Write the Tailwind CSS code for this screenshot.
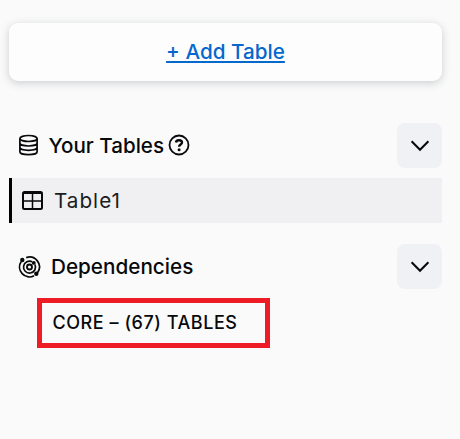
<!DOCTYPE html>
<html lang="en">
<head>
<meta charset="utf-8">
<title>Tables</title>
<script src="https://cdn.jsdelivr.net/npm/@tailwindcss/browser@4"></script>
</head>
<body class="bg-[#fafafa] font-['Inter',sans-serif] text-[#08090b] overflow-hidden">
<main class="w-[442px] pl-[9px] pt-[23px] h-[439px]">
  <div class="h-[58px] rounded-[9px] bg-[#fdfdfd] shadow-[0_2px_8px_rgba(40,50,70,0.22)] flex items-center justify-center">
    <a class="text-[20.700px] leading-[24px] font-medium text-[#0568cd] underline decoration-2 underline-offset-[2px] whitespace-nowrap">+ Add Table</a>
  </div>
  <section class="mt-[42px]">
    <header class="flex items-center h-[45px] pl-[9px]">
      <svg class="w-[21px] h-[22px] mb-[2px] shrink-0" viewBox="0 0 21 22" fill="none" stroke="currentColor" stroke-width="1.700"><ellipse cx="10.500" cy="4.500" rx="8.600" ry="3"/><path d="M1.900 4.500v13.200c0 1.700 3.900 3 8.600 3s8.600-1.300 8.600-3V4.500M1.900 9c0 1.700 3.900 3 8.600 3s8.600-1.300 8.600-3M1.900 13.300c0 1.700 3.900 3 8.600 3s8.600-1.300 8.600-3"/></svg>
      <h2 class="ml-[9.500px] w-[115px] text-[20.600px] leading-[24px] font-medium whitespace-nowrap">Your Tables</h2>
      <svg class="ml-[4px] mb-[2px] w-[22px] h-[22px] shrink-0" viewBox="0 0 22 22" fill="none" stroke="currentColor"><circle cx="11" cy="11" r="9.500" stroke-width="1.800"/><path d="M8 8.500C8.200 6.900 9.400 6.300 11 6.300c1.800 0 3 .9 3 2.300 0 2-2.900 2-2.900 4.100" stroke-width="2.400"/><circle cx="11.100" cy="15.700" r="1.500" fill="currentColor" stroke="none"/></svg>
      <button class="ml-auto w-[45px] h-[45px] rounded-[8px] bg-[#f0f1f5] flex items-center justify-center"><svg class="w-[20px] h-[12px]" viewBox="0 0 20 12" fill="none" stroke="currentColor" stroke-width="2.100"><path d="M1.600 1.300l8.400 8.400 8.400-8.400"/></svg></button>
    </header>
    <div class="mt-[10px] h-[45px] border-l-3 border-black bg-[#f0f0f2] flex items-center pl-[10px]">
      <svg class="w-[21px] h-[19px] shrink-0" viewBox="0 0 21 19" fill="none" stroke="currentColor"><rect x="1" y="1" width="19" height="17" rx="1.500" stroke-width="2"/><path d="M1 2h19" stroke-width="2"/><path d="M10.500 2v16M1 10h19" stroke-width="1.500"/></svg>
      <span class="ml-[11px] text-[20.700px] leading-[24px] tracking-[1px] whitespace-nowrap text-[#1b1c1f]">Table1</span>
    </div>
  </section>
  <section class="mt-[21px]">
    <header class="flex items-center h-[45px] pl-[9px]">
      <svg class="w-[23px] h-[22px] shrink-0" viewBox="0 0 23 22" fill="none" stroke="currentColor" stroke-width="1.700"><circle cx="11.500" cy="11" r="2.500" stroke-width="1.900"/><path d="M14.200 5.700A6 6 0 1 0 17 8.600"/><path d="M8.200 1.600A9.900 9.900 0 0 1 19.700 16.500M16 19.800A9.900 9.900 0 0 1 3.100 5.700"/><g fill="currentColor" stroke="none"><circle cx="4.300" cy="4" r="2.200"/><circle cx="18.300" cy="17.800" r="2.200"/><circle cx="15.800" cy="6.900" r="1.900"/></g></svg>
      <h2 class="ml-[10px] text-[20.700px] leading-[24px] font-medium whitespace-nowrap">Dependencies</h2>
      <button class="ml-auto w-[45px] h-[45px] rounded-[8px] bg-[#f0f1f5] flex items-center justify-center"><svg class="w-[20px] h-[12px]" viewBox="0 0 20 12" fill="none" stroke="currentColor" stroke-width="2.100"><path d="M1.600 1.300l8.400 8.400 8.400-8.400"/></svg></button>
    </header>
    <div class="mt-[9px] ml-[28px] w-[233px] h-[50px] border-5 border-[#ee1c25] flex items-center pl-[10.500px]">
      <span class="text-[18px] leading-[22px] font-medium tracking-[0.540px] whitespace-nowrap">CORE – (67) TABLES</span>
    </div>
  </section>
</main>
</body>
</html>
